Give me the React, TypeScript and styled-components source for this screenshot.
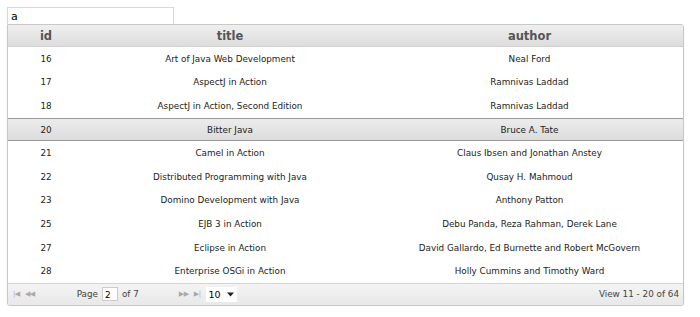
import React from 'react';
import styled, { createGlobalStyle } from 'styled-components';

const GlobalStyle = createGlobalStyle`
  html, body { margin: 0; padding: 0; background: #fff; }
  body { font-family: "DejaVu Sans", Verdana, sans-serif; }
`;

const Page = styled.div`
  padding: 7px 0 0 7px;
  width: 677px;
`;

const Search = styled.input`
  display: block;
  box-sizing: border-box;
  width: 167px;
  height: 17px;
  margin: 0;
  padding: 0 3px;
  border: 1px solid #d8d8d8;
  border-bottom: none;
  font-family: "DejaVu Sans", Verdana, sans-serif;
  font-size: 11px;
  color: #000;
  outline: none;
`;

const Grid = styled.div`
  border: 1px solid #c8c8c8;
  border-radius: 0 3px 3px 3px;
  overflow: hidden;
  box-shadow: 0 1px 2px rgba(0, 0, 0, 0.08);
`;

const Row = styled.div<{ $selected?: boolean }>`
  display: grid;
  grid-template-columns: 76px 292px 1fr;
  height: 23.6px;
  box-sizing: border-box;
  align-items: center;
  font-size: 8.8px;
  color: #222;
  background: ${(p) => (p.$selected ? 'linear-gradient(#ececec, #dcdcdc)' : '#fff')};
  border-top: 1px solid ${(p) => (p.$selected ? '#9a9a9a' : 'transparent')};
  border-bottom: 1px solid ${(p) => (p.$selected ? '#9a9a9a' : 'transparent')};
`;

const HeadRow = styled.div`
  display: grid;
  grid-template-columns: 76px 292px 1fr;
  height: 21px;
  align-items: center;
  background: linear-gradient(#efefef 0%, #e6e6e6 50%, #dddddd 100%);
  border-bottom: 1px solid #cfcfcf;
  font-size: 11.5px;
  font-weight: bold;
  color: #555;
`;

const Cell = styled.div`
  text-align: center;
  white-space: nowrap;
  overflow: hidden;
`;

const Footer = styled.div`
  display: flex;
  align-items: center;
  height: 21px;
  border-top: 1px solid #d4d4d4;
  background: linear-gradient(#f4f4f4, #e8e8e8);
  font-size: 8.8px;
  color: #444;
  padding: 0 4px 0 5px;
`;

const Nav = styled.span<{ $gap?: number }>`
  font-size: 7px;
  color: #aaa;
  letter-spacing: -0.5px;
  margin-left: ${(p) => p.$gap ?? 0}px;
`;

const Pager = styled.div`
  display: flex;
  align-items: center;
  gap: 4px;
  margin-left: 42px;
`;

const PageBox = styled.span`
  display: inline-block;
  width: 16px;
  height: 14px;
  line-height: 14px;
  box-sizing: border-box;
  border: 1px solid #ccc;
  background: #fff;
  padding-left: 2px;
  color: #000;
`;

const SelectBox = styled.span`
  display: inline-flex;
  align-items: center;
  justify-content: space-between;
  width: 31px;
  height: 15px;
  box-sizing: border-box;
  background: #fff;
  padding: 0 3px 0 3px;
  color: #000;
  font-size: 9.5px;
  margin-left: 5px;
`;

const Info = styled.div`
  margin-left: auto;
`;

const books = [
  ['16', 'Art of Java Web Development', 'Neal Ford'],
  ['17', 'AspectJ in Action', 'Ramnivas Laddad'],
  ['18', 'AspectJ in Action, Second Edition', 'Ramnivas Laddad'],
  ['20', 'Bitter Java', 'Bruce A. Tate'],
  ['21', 'Camel in Action', 'Claus Ibsen and Jonathan Anstey'],
  ['22', 'Distributed Programming with Java', 'Qusay H. Mahmoud'],
  ['23', 'Domino Development with Java', 'Anthony Patton'],
  ['25', 'EJB 3 in Action', 'Debu Panda, Reza Rahman, Derek Lane'],
  ['27', 'Eclipse in Action', 'David Gallardo, Ed Burnette and Robert McGovern'],
  ['28', 'Enterprise OSGi in Action', 'Holly Cummins and Timothy Ward'],
];

export default function App() {
  return (
    <Page>
      <GlobalStyle />
      <Search defaultValue="a" />
      <Grid>
        <HeadRow>
          <Cell>id</Cell>
          <Cell>title</Cell>
          <Cell>author</Cell>
        </HeadRow>
        {books.map(([id, title, author]) => (
          <Row key={id} $selected={id === '20'}>
            <Cell>{id}</Cell>
            <Cell>{title}</Cell>
            <Cell>{author}</Cell>
          </Row>
        ))}
        <Footer>
          <Nav>|◀ &nbsp;&nbsp;◀◀</Nav>
          <Pager>
            <span>Page</span>
            <PageBox>2</PageBox>
            <span>of 7</span>
          </Pager>
          <Nav $gap={40}>▶▶ &nbsp;&nbsp;▶|</Nav>
          <SelectBox>
            10
            <svg width="7" height="5" viewBox="0 0 7 5">
              <path d="M0 0.5 L7 0.5 L3.5 4.5 Z" fill="#222" />
            </svg>
          </SelectBox>
          <Info>View 11 - 20 of 64</Info>
        </Footer>
      </Grid>
    </Page>
  );
}
